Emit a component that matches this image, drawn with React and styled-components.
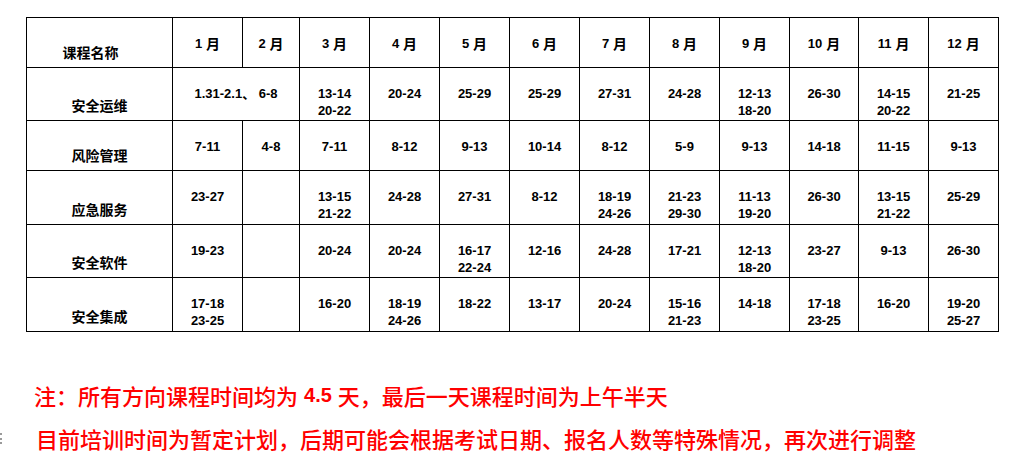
import React from 'react';
import styled, { createGlobalStyle } from 'styled-components';

const Global = createGlobalStyle`
  html, body { margin: 0; padding: 0; background: #ffffff; }
  body { font-family: "Liberation Sans", "Noto Sans CJK SC", sans-serif; }
`;

const Page = styled.div`
  width: 1012px;
  height: 465px;
  overflow: hidden;
  padding: 17px 0 0 0;
  box-sizing: border-box;
`;

const Grid = styled.div`
  margin-left: 26px;
  display: inline-grid;
  grid-template-columns: 145px 69px 56px 69px 69px 69px 69px 69px 69px 69px 68px 69px 69px;
  grid-template-rows: 49px 52px 49px 53px 52px 53px;
  gap: 1px;
  padding: 1px;
  background: #000;
`;

const Cell = styled.div`
  background: #fff;
  color: #000;
  font-family: "Liberation Sans", "Noto Sans CJK SC", sans-serif;
  font-weight: bold;
  font-size: 13px;
  line-height: 17px;
  text-align: center;
  display: flex;
  flex-direction: column;
  align-items: center;
  justify-content: flex-start;
  padding-top: 17px;
  box-sizing: border-box;
  grid-column: span ${(p) => p.$span || 1};
  white-space: nowrap;
`;

const MonthCell = styled.div`
  background: #fff;
  color: #000;
  font-weight: bold;
  font-size: 13px;
  display: flex;
  align-items: center;
  justify-content: center;
  padding-top: 1px;
  box-sizing: border-box;
  white-space: nowrap;
`;

const Yue = styled.span`
  font-family: "Noto Sans CJK SC", sans-serif;
  font-size: 14px;
  margin-left: 4px;
`;

const NameCell = styled.div`
  background: #fff;
  color: #000;
  font-family: "Noto Sans CJK SC", sans-serif;
  font-weight: bold;
  font-size: 14px;
  line-height: 18px;
  display: flex;
  align-items: flex-end;
  justify-content: center;
  padding-bottom: 6px;
  padding-right: ${(p) => (p.$head ? 18 : 0)}px;
  box-sizing: border-box;
  white-space: nowrap;
`;

const Notes = styled.div`
  margin-top: 42px;
  color: #ff0000;
  font-family: "Noto Sans CJK SC", sans-serif;
  font-weight: 500;
  font-size: 22px;
  line-height: 43px;
`;

const NoteLine = styled.div`
  display: flex;
  align-items: center;
  white-space: nowrap;
`;

const Marker = styled.span`
  width: 0;
  height: 11px;
  border-left: 2px dotted #9a9a9a;
  margin-right: ${(p) => p.$gap}px;
`;

const Spacer = styled.span`
  width: ${(p) => p.$w}px;
`;

const Num = styled.span`
  font-family: "Liberation Sans", sans-serif;
  font-weight: bold;
  font-size: 20px;
  margin: 0 6px;
`;

const months = ['1', '2', '3', '4', '5', '6', '7', '8', '9', '10', '11', '12'];

const rows = [
  {
    name: '安全运维',
    cells: [
      { span: 2, v: '1.31-2.1、 6-8' },
      '13-14/20-22', '20-24', '25-29', '25-29', '27-31', '24-28', '12-13/18-20', '26-30', '14-15/20-22', '21-25',
    ],
  },
  {
    name: '风险管理',
    cells: ['7-11', '4-8', '7-11', '8-12', '9-13', '10-14', '8-12', '5-9', '9-13', '14-18', '11-15', '9-13'],
  },
  {
    name: '应急服务',
    cells: ['23-27', '', '13-15/21-22', '24-28', '27-31', '8-12', '18-19/24-26', '21-23/29-30', '11-13/19-20', '26-30', '13-15/21-22', '25-29'],
  },
  {
    name: '安全软件',
    cells: ['19-23', '', '20-24', '20-24', '16-17/22-24', '12-16', '24-28', '17-21', '12-13/18-20', '23-27', '9-13', '26-30'],
  },
  {
    name: '安全集成',
    cells: ['17-18/23-25', '', '16-20', '18-19/24-26', '18-22', '13-17', '20-24', '15-16/21-23', '14-18', '17-18/23-25', '16-20', '19-20/25-27'],
  },
];

export default function App() {
  return (
    <Page>
      <Global />
      <Grid>
        <NameCell $head>课程名称</NameCell>
        {months.map((m) => (
          <MonthCell key={m}>
            {m}
            <Yue>月</Yue>
          </MonthCell>
        ))}
        {rows.map((r) => (
          <React.Fragment key={r.name}>
            <NameCell>{r.name}</NameCell>
            {r.cells.map((c, i) => {
              const span = typeof c === 'object' ? c.span : 1;
              const v = typeof c === 'object' ? c.v : c;
              const lines = v ? v.split('/') : [];
              return (
                <Cell key={i} $span={span}>
                  {lines.map((l, j) => (
                    <div key={j}>{l}</div>
                  ))}
                </Cell>
              );
            })}
          </React.Fragment>
        ))}
      </Grid>
      <Notes>
        <NoteLine>
          <Spacer $w={34} />
          注：所有方向课程时间均为<Num>4.5</Num>天，最后一天课程时间为上午半天
        </NoteLine>
        <NoteLine>
          <Marker $gap={34} />
          目前培训时间为暂定计划，后期可能会根据考试日期、报名人数等特殊情况，再次进行调整
        </NoteLine>
      </Notes>
    </Page>
  );
}
